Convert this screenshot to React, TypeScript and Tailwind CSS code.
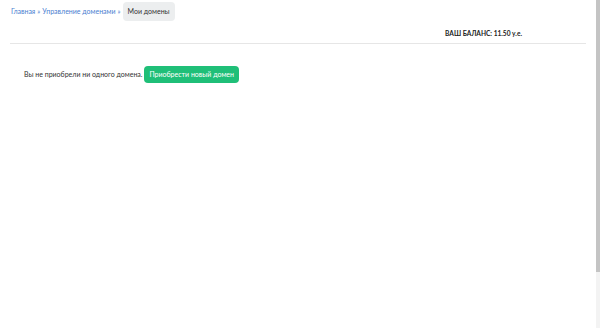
export default function App() {
  return (
    <div
      className="flex h-[328px] w-[600px] overflow-hidden bg-white text-[#333]"
      style={{ fontFamily: 'Lato, "Noto Sans", sans-serif' }}
    >
      {/* page */}
      <div className="flex flex-1 flex-col">
        <div className="flex items-center gap-[2px] pl-[11px] pt-[2px] text-[7px] text-[#4a80d0]">
          <span>Главная</span>
          <span>»</span>
          <span>Управление доменами</span>
          <span>»</span>
          <span className="rounded-[4px] bg-[#eceeef] px-[5px] py-[4px] text-[7px] text-[#333]">Мои домены</span>
        </div>

        <div className="mx-[10px] mt-[8px] flex justify-end border-b border-[#e6e6e6] pb-[5px] pr-[64px]">
          <span className="text-[6.6px] font-bold text-[#222]">ВАШ БАЛАНС: 11.50 у.е.</span>
        </div>

        <div className="flex items-center gap-[2px] pl-[24px] pt-[22px] text-[7px] text-[#333]">
          <span>Вы не приобрели ни одного домена.</span>
          <button className="rounded-[4px] bg-[#1fbf78] px-[5px] py-[3px] text-[7px] text-white">
            Приобрести новый домен
          </button>
        </div>
      </div>

      {/* scrollbar */}
      <div className="flex w-[4px] flex-col bg-[#f3f3f3]">
        <div className="h-[272px] bg-[#c4c4c4]" />
      </div>
    </div>
  );
}
